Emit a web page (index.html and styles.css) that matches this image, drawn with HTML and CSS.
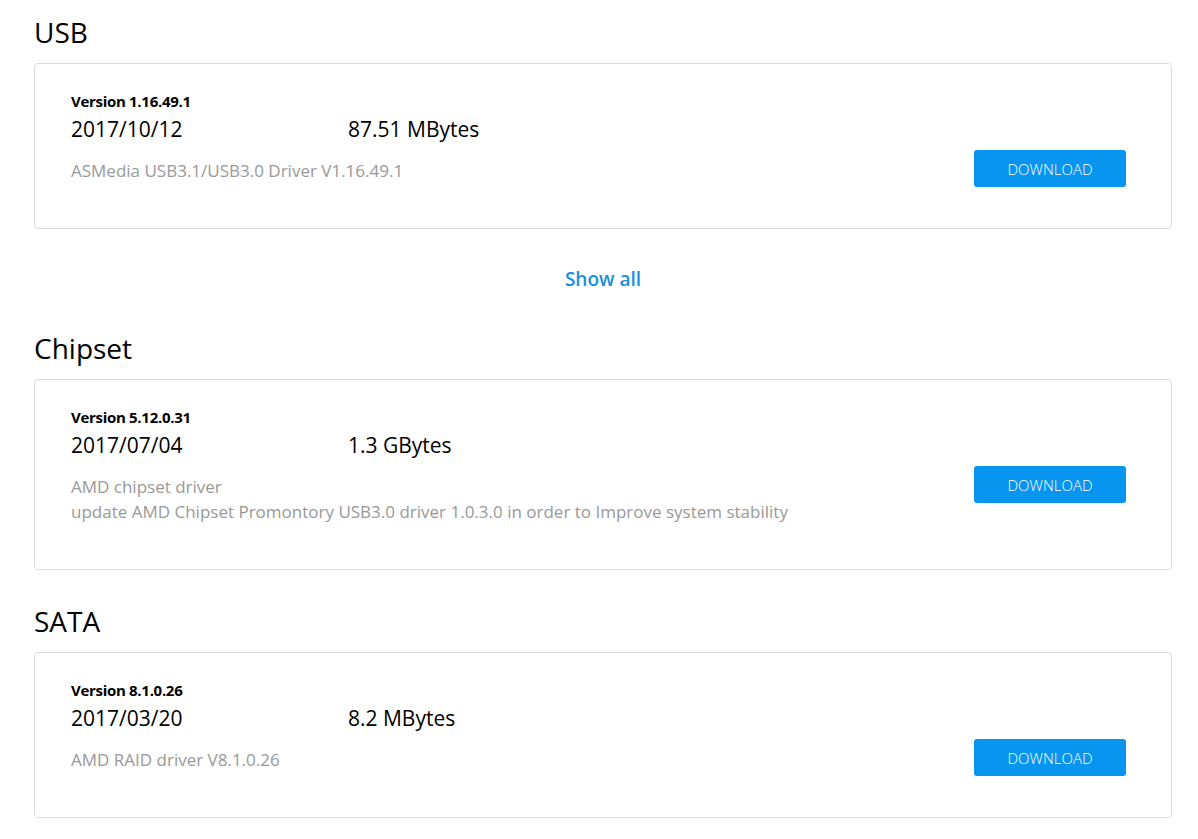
FILE: index.html
```html
<!DOCTYPE html>
<html lang="en">
<head>
    <meta charset="UTF-8">
    <meta name="viewport" content="width=device-width, initial-scale=1.0">
    <title>Drivers &amp; Tools</title>
    <link rel="stylesheet" href="styles.css">
</head>
<body>
    <div class="container">
        <!-- USB -->
        <section class="driver-group">
            <h2 class="group-title">USB</h2>
            <div class="driver-card">
                <div class="driver-info">
                    <div class="driver-version">Version 1.16.49.1</div>
                    <div class="driver-meta">
                        <span class="driver-date">2017/10/12</span>
                        <span class="driver-size">87.51 MBytes</span>
                    </div>
                    <div class="driver-desc">
                        <p>ASMedia USB3.1/USB3.0 Driver V1.16.49.1</p>
                    </div>
                </div>
                <div class="driver-action">
                    <button class="download-btn">DOWNLOAD</button>
                </div>
            </div>
            <div class="show-all"><a href="#">Show all</a></div>
        </section>

        <!-- Chipset -->
        <section class="driver-group">
            <h2 class="group-title">Chipset</h2>
            <div class="driver-card">
                <div class="driver-info">
                    <div class="driver-version">Version 5.12.0.31</div>
                    <div class="driver-meta">
                        <span class="driver-date">2017/07/04</span>
                        <span class="driver-size">1.3 GBytes</span>
                    </div>
                    <div class="driver-desc">
                        <p>AMD chipset driver</p>
                        <p>update AMD Chipset Promontory USB3.0 driver 1.0.3.0 in order to Improve system stability</p>
                    </div>
                </div>
                <div class="driver-action">
                    <button class="download-btn">DOWNLOAD</button>
                </div>
            </div>
        </section>

        <!-- SATA -->
        <section class="driver-group">
            <h2 class="group-title">SATA</h2>
            <div class="driver-card">
                <div class="driver-info">
                    <div class="driver-version">Version 8.1.0.26</div>
                    <div class="driver-meta">
                        <span class="driver-date">2017/03/20</span>
                        <span class="driver-size">8.2 MBytes</span>
                    </div>
                    <div class="driver-desc">
                        <p>AMD RAID driver V8.1.0.26</p>
                    </div>
                </div>
                <div class="driver-action">
                    <button class="download-btn">DOWNLOAD</button>
                </div>
            </div>
        </section>
    </div>
</body>
</html>
```

FILE: styles.css
```css
* {
    margin: 0;
    padding: 0;
    box-sizing: border-box;
}

body {
    font-family: 'Open Sans', 'Noto Sans', sans-serif;
    background: #fff;
    color: #000;
}

.container {
    width: 1138px;
    margin-left: 34px;
    padding-top: 14px;
}

.group-title {
    font-size: 28px;
    font-weight: 400;
    line-height: 36px;
    margin-bottom: 13px;
}

.driver-card {
    display: flex;
    justify-content: space-between;
    border: 1px solid #dcdcdc;
    border-radius: 4px;
    padding: 26px 45px 41px 36px;
}

.driver-version {
    font-size: 15px;
    font-weight: 700;
    line-height: 22px;
    letter-spacing: -0.3px;
}

.driver-meta {
    display: flex;
    margin-top: 2px;
    font-size: 21px;
    line-height: 30px;
}

.driver-date {
    width: 277px;
}

.driver-desc {
    margin: 14px 0 4px;
    font-size: 17px;
    line-height: 25px;
    color: #999;
}

.driver-action {
    padding-top: 60px;
}

.download-btn {
    display: block;
    width: 152px;
    height: 37px;
    background: #0795f0;
    color: #fff;
    border: none;
    border-radius: 3px;
    font-family: inherit;
    font-size: 15px;
    font-weight: 300;
    cursor: pointer;
}

.show-all {
    text-align: center;
    padding: 37px 0 38px;
}

.show-all a {
    color: #1a8ee0;
    font-size: 19px;
    font-weight: 600;
    text-decoration: none;
}

.show-all + .driver-group,
.driver-group + .driver-group {
    margin-top: 33px;
}

.driver-group:first-child + .driver-group {
    margin-top: 0;
}
```
